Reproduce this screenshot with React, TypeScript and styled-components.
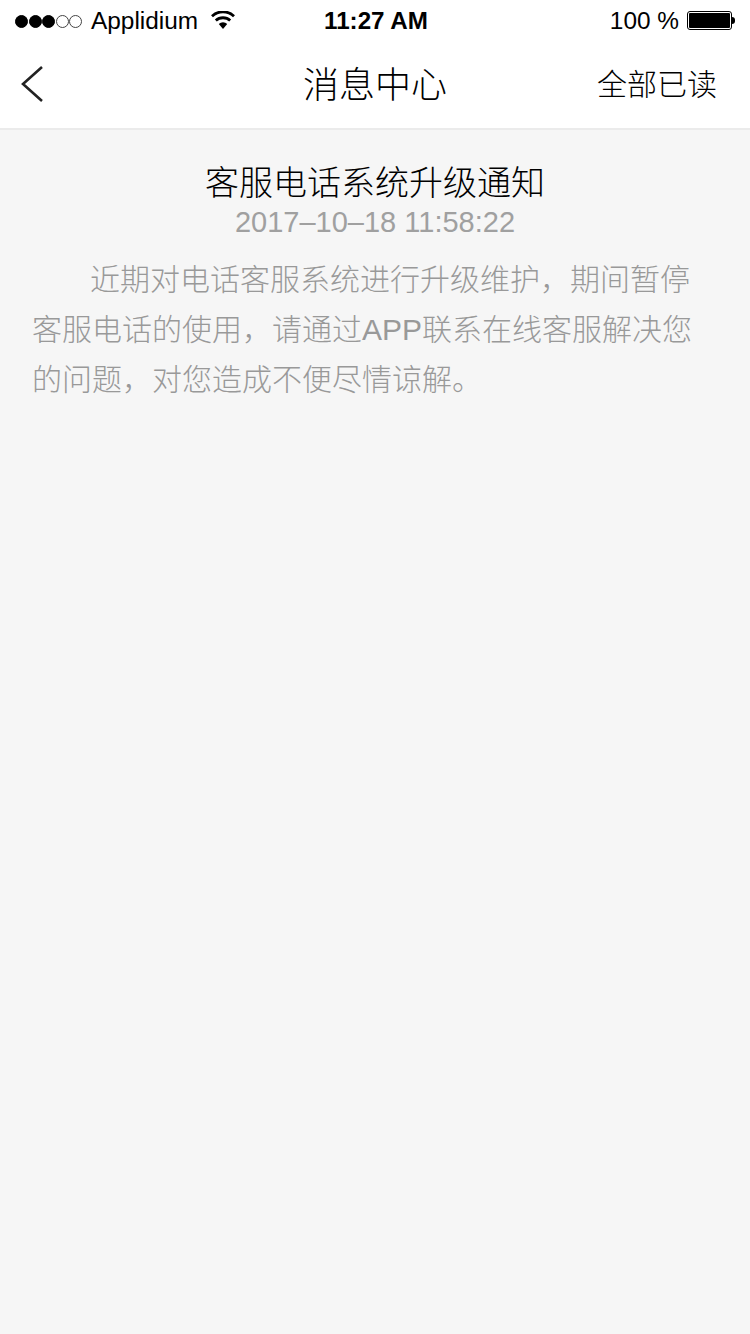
import styled, { createGlobalStyle } from "styled-components";

const GlobalStyle = createGlobalStyle`
    html, body {
        margin: 0;
        padding: 0;
        background: #f6f6f6;
    }
    * {
        box-sizing: border-box;
    }
`;

const SANS = `"Liberation Sans", "Noto Sans CJK SC", sans-serif`;

const Page = styled.div`
    width: 750px;
    min-height: 1334px;
    background: #f6f6f6;
    font-family: ${SANS};
`;

const StatusBar = styled.div`
    height: 40px;
    background: #fff;
    display: grid;
    grid-template-columns: 1fr auto 1fr;
    align-items: center;
    padding: 2px 15px 0;
    color: #000;
    font-size: 24.4px;
`;

const StatusLeft = styled.div`
    display: flex;
    align-items: center;
`;

const StatusRight = styled.div`
    display: flex;
    align-items: center;
    justify-content: flex-end;
    gap: 8px;
`;

const Dots = styled.div`
    display: flex;
    gap: 0.5px;
    margin-right: 9px;
`;

const Dot = styled.span<{ $on: boolean }>`
    width: 13px;
    height: 13px;
    border-radius: 50%;
    border: 1px solid ${(p) => (p.$on ? "#000" : "#444")};
    background: ${(p) => (p.$on ? "#000" : "transparent")};
`;

const Wifi = styled.svg`
    width: 24px;
    height: 18px;
    margin: 0 0 2px 13px;
`;

const Clock = styled.div`
    font-weight: 700;
    font-size: 24.2px;
    margin-left: 2px;
`;

const Battery = styled.div`
    display: flex;
    align-items: center;
    margin-top: -2px;
`;

const BatteryBody = styled.div`
    width: 45px;
    height: 19px;
    border: 1px solid #000;
    border-radius: 3px;
    padding: 1px;
    &::after {
        content: "";
        display: block;
        height: 100%;
        background: #000;
        border-radius: 1px;
    }
`;

const BatteryTip = styled.div`
    width: 3px;
    height: 7px;
    background: #000;
    border-radius: 0 3px 3px 0;
`;

const NavBar = styled.div`
    height: 90px;
    background: #fff;
    border-bottom: 2px solid #ebebeb;
    display: grid;
    grid-template-columns: 1fr auto 1fr;
    align-items: center;
    padding: 0 33px 4px;
`;

const BackIcon = styled.svg`
    width: 24px;
    height: 38px;
    display: block;
    margin: 4px 0 0 -13px;
`;

const NavTitle = styled.h1`
    margin: 0;
    font-size: 36px;
    font-weight: 300;
    color: #000;
`;

const ReadAll = styled.div`
    justify-self: end;
    font-size: 30px;
    font-weight: 300;
    color: #000;
`;

const Article = styled.div`
    padding: 33px 32px 0;
`;

const Title = styled.h2`
    margin: 0;
    text-align: center;
    font-size: 34px;
    line-height: 40px;
    font-weight: 300;
    color: #000;
`;

const Time = styled.div`
    text-align: center;
    font-size: 29px;
    line-height: 38px;
    color: #a0a0a0;
`;

const Body = styled.p`
    margin: 14px 0 0;
    font-size: 30px;
    line-height: 50px;
    font-weight: 300;
    color: #999;
    text-indent: 58px;
`;

export default function App() {
    return (
        <Page>
            <GlobalStyle />
            <StatusBar>
                <StatusLeft>
                    <Dots>
                        <Dot $on />
                        <Dot $on />
                        <Dot $on />
                        <Dot $on={false} />
                        <Dot $on={false} />
                    </Dots>
                    Applidium
                    <Wifi viewBox="0 0 24 18">
                        <path d="M12 18 L7.8 13 A6 6 0 0 1 16.2 13 Z" fill="#000" />
                        <path d="M4.8 9.6 A10.5 10.5 0 0 1 19.2 9.6" fill="none" stroke="#000" strokeWidth="2.8" />
                        <path d="M1 5.2 A16 16 0 0 1 23 5.2" fill="none" stroke="#000" strokeWidth="2.8" />
                    </Wifi>
                </StatusLeft>
                <Clock>11:27 AM</Clock>
                <StatusRight>
                    100 %
                    <Battery>
                        <BatteryBody />
                        <BatteryTip />
                    </Battery>
                </StatusRight>
            </StatusBar>
            <NavBar>
                <BackIcon viewBox="0 0 24 38">
                    <path d="M22 2 L3 19 L22 36" fill="none" stroke="#222" strokeWidth="2.6" />
                </BackIcon>
                <NavTitle>消息中心</NavTitle>
                <ReadAll>全部已读</ReadAll>
            </NavBar>
            <Article>
                <Title>客服电话系统升级通知</Title>
                <Time>2017–10–18 11:58:22</Time>
                <Body>
                    近期对电话客服系统进行升级维护，期间暂停客服电话的使用，请通过APP联系在线客服解决您的问题，对您造成不便尽情谅解。
                </Body>
            </Article>
        </Page>
    );
}
